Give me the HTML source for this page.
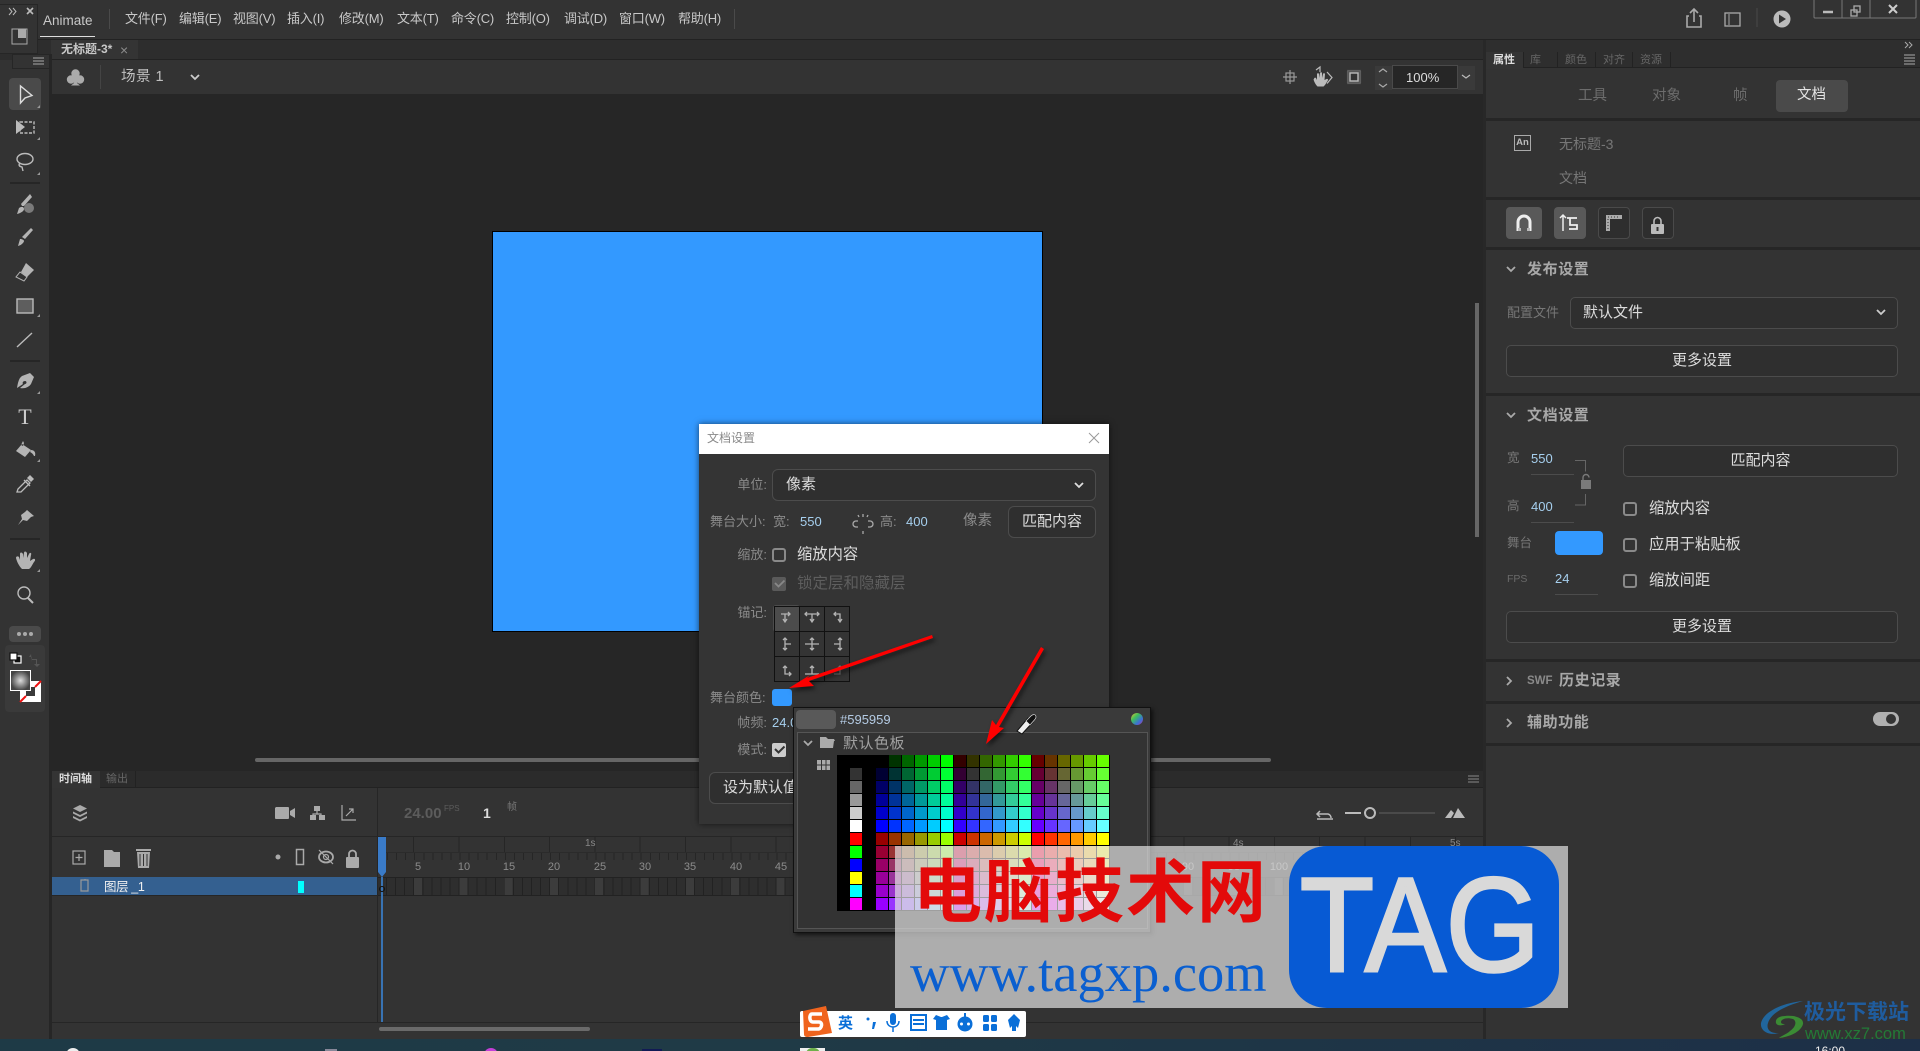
<!DOCTYPE html>
<html lang="zh"><head><meta charset="utf-8"><title>Animate</title>
<style>
html,body{margin:0;padding:0;background:#333}
#p{position:relative;width:1920px;height:1051px;overflow:hidden;background:#333;font-family:"Liberation Sans","Noto Sans CJK SC",sans-serif;color:#ccc}
.a{position:absolute}
.t{position:absolute;white-space:nowrap;line-height:1}
.m{font-size:13px;color:#c8c8c8;top:12px;letter-spacing:-.2px}
.l{font-size:13px;color:#8a8a8a;text-align:right;width:60px;left:707px}
.b{position:absolute;box-sizing:border-box;border:1px solid #4c4c4c;border-radius:5px;background:#2f2f2f;color:#ddd;font-size:15px;text-align:center;line-height:30px}
.s{position:absolute;left:1486px;width:434px;height:3px;background:#262626}
.h{font-size:15px;font-weight:700;color:#a8a8a8;left:1527px;letter-spacing:.6px}
.c{position:absolute;box-sizing:border-box;width:14px;height:14px;border:2px solid #8a8a8a;border-radius:3px}
.r{font-size:11px;color:#8c8c8c;top:862px;width:30px;text-align:center}
svg{position:absolute;left:0;top:0;overflow:visible}
#g{position:absolute;left:837px;top:755px;width:273px;height:156px;background:#000;display:grid;grid-template-columns:repeat(21,12px);grid-auto-rows:12px;gap:1px}
#g b{display:block}
</style></head><body><div id="p">

<!-- base regions -->
<div class="a" style="left:0;top:0;width:1920px;height:39px;background:#333"></div>
<div class="a" style="left:0;top:39px;width:1920px;height:1px;background:#222"></div>
<div class="a" style="left:0;top:40px;width:1486px;height:20px;background:#2d2d2d"></div>
<div class="a" style="left:51px;top:40px;width:87px;height:19px;background:#343434"></div>
<div class="a" style="left:51px;top:59px;width:1432px;height:1px;background:#222"></div>
<div class="a" style="left:52px;top:60px;width:1431px;height:34px;background:#333"></div>
<div class="a" style="left:50px;top:94px;width:1433px;height:677px;background:#262626"></div>
<div class="a" style="left:49px;top:54px;width:3px;height:985px;background:#262626"></div>
<div class="a" style="left:1483px;top:40px;width:3px;height:999px;background:#282828"></div>

<!-- stage -->
<div class="a" style="left:492px;top:231px;width:549px;height:399px;background:#39f;border:1px solid #000"></div>
<div class="a" style="left:255px;top:758px;width:1016px;height:4px;background:#666;border-radius:2px"></div>
<div class="a" style="left:1475px;top:303px;width:4px;height:234px;background:#666"></div>

<!-- top bar -->
<span class="t" style="left:43px;top:14px;font-size:13.5px;color:#c8c8c8">Animate</span>
<div class="a" style="left:40px;top:36px;width:55px;height:1px;background:#ddd"></div>
<div class="a" style="left:109px;top:9px;width:1px;height:20px;background:#4a4a4a"></div>
<span class="t m" style="left:125px">文件(F)</span>
<span class="t m" style="left:179px">编辑(E)</span>
<span class="t m" style="left:233px">视图(V)</span>
<span class="t m" style="left:287px">插入(I)</span>
<span class="t m" style="left:339px">修改(M)</span>
<span class="t m" style="left:397px">文本(T)</span>
<span class="t m" style="left:451px">命令(C)</span>
<span class="t m" style="left:506px">控制(O)</span>
<span class="t m" style="left:564px">调试(D)</span>
<span class="t m" style="left:619px">窗口(W)</span>
<span class="t m" style="left:678px">帮助(H)</span>
<div class="a" style="left:734px;top:9px;width:1px;height:20px;background:#4a4a4a"></div>

<!-- float panel -->
<div class="a" style="left:0;top:4px;width:38px;height:50px;background:#333;border:1px solid #262626;border-left:0;box-sizing:border-box"></div>
<div class="a" style="left:12px;top:54px;width:38px;height:15px;background:#333;border:1px solid #262626;box-sizing:border-box"></div>

<!-- tab/scene -->
<span class="t" style="left:61px;top:43px;font-size:12px;font-weight:700;color:#c8c8c8">无标题-3*</span>
<span class="t" style="left:120px;top:43px;font-size:14px;color:#8c8c8c">×</span>
<span class="t" style="left:121px;top:70px;font-size:14.5px;color:#c0c0c0;letter-spacing:.5px">场景 1</span>
<div class="a" style="left:100px;top:65px;width:1px;height:24px;background:#444"></div>

<!-- zoom control -->
<div class="a" style="left:1375px;top:66px;width:17px;height:24px;background:#3a3a3a"></div>
<div class="a" style="left:1392px;top:65px;width:66px;height:24px;background:#262626;border:1px solid #4a4a4a;box-sizing:border-box"></div>
<div class="a" style="left:1458px;top:66px;width:17px;height:24px;background:#3a3a3a"></div>
<span class="t" style="left:1406px;top:71px;font-size:13px;color:#ddd">100%</span>

<!-- right panel -->
<div class="a" style="left:1486px;top:40px;width:434px;height:12px;background:#2e2e2e"></div>
<div class="a" style="left:1486px;top:52px;width:434px;height:16px;background:#2e2e2e;border-bottom:1px solid #222;box-sizing:border-box"></div>
<div class="a" style="left:1486px;top:52px;width:38px;height:17px;background:#343434"></div>
<div class="a" style="left:1557px;top:52px;width:1px;height:16px;background:#222"></div>
<div class="a" style="left:1595px;top:52px;width:1px;height:16px;background:#222"></div>
<div class="a" style="left:1632px;top:52px;width:1px;height:16px;background:#222"></div>
<div class="a" style="left:1670px;top:52px;width:1px;height:16px;background:#222"></div>
<div class="a" style="left:1523px;top:52px;width:1px;height:16px;background:#222"></div>
<span class="t" style="left:1493px;top:55px;font-size:11px;font-weight:700;color:#ddd">属性</span>
<span class="t" style="left:1530px;top:55px;font-size:11px;color:#666">库</span>
<span class="t" style="left:1565px;top:55px;font-size:11px;color:#666">颜色</span>
<span class="t" style="left:1603px;top:55px;font-size:11px;color:#666">对齐</span>
<span class="t" style="left:1640px;top:55px;font-size:11px;color:#666">资源</span>

<span class="t" style="left:1578px;top:89px;font-size:14.5px;color:#6c6c6c">工具</span>
<span class="t" style="left:1652px;top:89px;font-size:14.5px;color:#6c6c6c">对象</span>
<span class="t" style="left:1733px;top:89px;font-size:14.5px;color:#6c6c6c">帧</span>
<div class="a" style="left:1776px;top:80px;width:72px;height:32px;background:#4a4a4a;border-radius:4px"></div>
<span class="t" style="left:1797px;top:88px;font-size:14.5px;color:#e4e4e4">文档</span>
<div class="s" style="top:118px"></div>

<div class="a" style="left:1514px;top:135px;width:17px;height:16px;border:1px solid #aaa;box-sizing:border-box;font-size:9.5px;line-height:14px;text-align:center;color:#bbb;font-weight:700">An</div>
<span class="t" style="left:1559px;top:137px;font-size:14px;color:#777">无标题-3</span>
<span class="t" style="left:1559px;top:171px;font-size:14px;color:#777">文档</span>
<div class="s" style="top:197px"></div>

<div class="a" style="left:1506px;top:207px;width:36px;height:32px;background:#595959;border-radius:4px"></div>
<div class="a" style="left:1554px;top:207px;width:32px;height:32px;background:#595959;border-radius:4px"></div>
<div class="a" style="left:1598px;top:207px;width:32px;height:32px;background:#2e2e2e;border:1px solid #4a4a4a;border-radius:4px;box-sizing:border-box"></div>
<div class="a" style="left:1642px;top:207px;width:32px;height:32px;background:#2e2e2e;border:1px solid #4a4a4a;border-radius:4px;box-sizing:border-box"></div>
<div class="s" style="top:247px"></div>

<span class="t h" style="top:262px">发布设置</span>
<span class="t" style="left:1507px;top:306px;font-size:13px;color:#777">配置文件</span>
<div class="b" style="left:1570px;top:297px;width:328px;height:32px;text-align:left;padding-left:12px">默认文件</div>
<div class="b" style="left:1506px;top:345px;width:392px;height:32px">更多设置</div>
<div class="s" style="top:393px"></div>

<span class="t h" style="top:408px">文档设置</span>
<span class="t" style="left:1507px;top:452px;font-size:12.5px;color:#777">宽</span>
<span class="t" style="left:1531px;top:452px;font-size:13px;color:#a6cfee">550</span>
<div class="a" style="left:1531px;top:474px;width:43px;height:1px;background:#4c4c4c"></div>
<span class="t" style="left:1507px;top:500px;font-size:12.5px;color:#777">高</span>
<span class="t" style="left:1531px;top:500px;font-size:13px;color:#a6cfee">400</span>
<div class="a" style="left:1531px;top:522px;width:43px;height:1px;background:#4c4c4c"></div>
<span class="t" style="left:1507px;top:537px;font-size:12.5px;color:#777">舞台</span>
<div class="a" style="left:1555px;top:531px;width:48px;height:24px;background:#39f;border-radius:4px"></div>
<span class="t" style="left:1507px;top:574px;font-size:10.5px;color:#6a6a6a">FPS</span>
<span class="t" style="left:1555px;top:572px;font-size:13px;color:#a6cfee">24</span>
<div class="a" style="left:1555px;top:594px;width:43px;height:1px;background:#4c4c4c"></div>
<div class="b" style="left:1623px;top:445px;width:275px;height:32px">匹配内容</div>
<div class="c" style="left:1623px;top:502px"></div><span class="t" style="left:1649px;top:501px;font-size:15.3px;color:#ddd">缩放内容</span>
<div class="c" style="left:1623px;top:538px"></div><span class="t" style="left:1649px;top:537px;font-size:15.3px;color:#ddd">应用于粘贴板</span>
<div class="c" style="left:1623px;top:574px"></div><span class="t" style="left:1649px;top:573px;font-size:15.3px;color:#ddd">缩放间距</span>
<div class="b" style="left:1506px;top:611px;width:392px;height:32px">更多设置</div>
<div class="s" style="top:659px"></div>
<span class="t" style="left:1527px;top:676px;font-size:11.5px;font-weight:700;color:#8a8a8a">SWF</span>
<span class="t h" style="left:1559px;top:673px">历史记录</span>
<div class="s" style="top:701px"></div>
<span class="t h" style="top:715px">辅助功能</span>
<div class="a" style="left:1873px;top:712px;width:26px;height:14px;background:#b0b0b0;border-radius:7px"></div>
<div class="a" style="left:1886px;top:714px;width:10px;height:10px;background:#333;border-radius:5px"></div>
<div class="s" style="top:743px"></div>

<!-- timeline -->
<div class="a" style="left:52px;top:771px;width:1431px;height:16px;background:#2b2b2b;border-bottom:1px solid #222"></div>
<div class="a" style="left:52px;top:771px;width:48px;height:17px;background:#343434"></div>
<div class="a" style="left:135px;top:771px;width:1px;height:16px;background:#222"></div>
<span class="t" style="left:59px;top:774px;font-size:11px;font-weight:700;color:#ddd">时间轴</span>
<span class="t" style="left:106px;top:774px;font-size:11px;color:#666">输出</span>
<div class="a" style="left:377px;top:788px;width:1px;height:234px;background:#262626"></div>
<div class="a" style="left:52px;top:836px;width:1431px;height:1px;background:#262626"></div>
<span class="t" style="left:404px;top:806px;font-size:15px;font-weight:700;color:#5c5c5c">24.00</span>
<span class="t" style="left:444px;top:805px;font-size:8px;color:#5c5c5c">FPS</span>
<span class="t" style="left:483px;top:806px;font-size:14px;font-weight:700;color:#ddd">1</span>
<span class="t" style="left:507px;top:803px;font-size:10px;color:#777">帧</span>
<!-- ruler -->
<div class="a" style="left:378px;top:837px;width:1092px;height:15px;background:repeating-linear-gradient(90deg,transparent 0 35.2px,#262626 35.2px 36.2px,transparent 36.2px 45.3px)"></div>
<div class="a" style="left:378px;top:852px;width:1092px;height:8px;background:repeating-linear-gradient(90deg,#262626 0 1px,transparent 1px 9.06px)"></div>
<div class="a" style="left:378px;top:852px;width:1092px;height:1px;background:#2b2b2b"></div>
<span class="t r" style="left:403px">5</span><span class="t r" style="left:449px">10</span><span class="t r" style="left:494px">15</span><span class="t r" style="left:539px">20</span><span class="t r" style="left:585px">25</span><span class="t r" style="left:630px">30</span><span class="t r" style="left:675px">35</span><span class="t r" style="left:721px">40</span><span class="t r" style="left:766px">45</span><span class="t r" style="left:1173px">90</span><span class="t r" style="left:1219px">95</span><span class="t r" style="left:1264px">100</span><span class="t r" style="left:1309px">105</span><span class="t r" style="left:1355px">110</span><span class="t r" style="left:1400px">115</span><span class="t r" style="left:1445px">120</span>
<span class="t" style="left:585px;top:839px;font-size:10px;color:#888">1s</span>
<span class="t" style="left:1233px;top:839px;font-size:10px;color:#888">4s</span>
<span class="t" style="left:1450px;top:839px;font-size:10px;color:#888">5s</span>
<!-- layer row -->
<div class="a" style="left:52px;top:877px;width:325px;height:19px;background:#346090;border-bottom:1px solid #262626;box-sizing:border-box"></div>
<span class="t" style="left:104px;top:881px;font-size:12.5px;color:#f0f0f0;letter-spacing:-.4px">图层 _1</span>
<div class="a" style="left:298px;top:881px;width:6px;height:12px;background:#0ff"></div>
<div class="a" style="left:378px;top:877px;width:1092px;height:19px;background:repeating-linear-gradient(90deg,#2e2e2e 0 8.06px,#222 8.06px 9.06px);border-top:1px solid #222;border-bottom:1px solid #222;box-sizing:border-box"></div>
<div class="a" style="left:414.2px;top:878px;width:1056px;height:17px;background:repeating-linear-gradient(90deg,#3c3c3c 0 8px,transparent 8px 45.3px)"></div>
<div class="a" style="left:381px;top:877px;width:2px;height:145px;background:#3873b3"></div>
<div class="a" style="left:52px;top:1022px;width:1431px;height:1px;background:#262626"></div>
<div class="a" style="left:379px;top:1027px;width:211px;height:4px;background:#6a6a6a;border-radius:2px"></div>

<!-- taskbar -->
<div class="a" style="left:0;top:1039px;width:1920px;height:12px;background:linear-gradient(90deg,#1e3a46,#1f3a46 40%,#1d2f47)"></div>
<div class="a" style="left:66px;top:1048px;width:14px;height:14px;background:#eee;border-radius:7px"></div>
<div class="a" style="left:325px;top:1049px;width:12px;height:6px;background:#889"></div>
<div class="a" style="left:484px;top:1048px;width:14px;height:14px;background:#c43fd8;border-radius:7px"></div>
<div class="a" style="left:642px;top:1049px;width:20px;height:6px;background:#111a55"></div>
<div class="a" style="left:800px;top:1048px;width:25px;height:6px;background:#eee"></div>
<div class="a" style="left:806px;top:1048px;width:14px;height:6px;background:#6db04a;border-radius:7px 7px 0 0"></div>
<span class="t" style="left:1815px;top:1045px;font-size:12px;color:#eee">16:00</span>

<!-- base icons -->
<svg width="1920" height="1051" viewBox="0 0 1920 1051">
<g fill="none" stroke="#bbb" stroke-width="1.500">
<!-- float -->
<path d="M9 8l3 3.500-3 3.500M13 8l3 3.500-3 3.500" stroke-width="1"/>
<path d="M27 8l6 6M33 8l-6 6" stroke-width="1.600"/>
<rect x="12" y="29" width="15" height="15" fill="none" stroke="#aaa" stroke-width="1"/>
<rect x="18" y="29" width="8" height="9" fill="#aaa" stroke="none"/>
<path d="M34 59h11M34 62h11M34 65h11" stroke="#aaa" stroke-width="1" transform="translate(-1 -1)"/>
</g>
<!-- toolbar -->
<rect x="9" y="78" width="32" height="32" rx="4" fill="#4a4a4a"/>
<g fill="none" stroke="#bbb" stroke-width="1.400">
<path d="M20.500 86v17l4.500-5 7-2.500z" stroke="#ddd"/>
<path d="M16 120v14l9-7z" fill="#bbb" stroke="none"/>
<rect x="20" y="122" width="14" height="11" stroke-dasharray="3 1.500"/>
<ellipse cx="25" cy="159" rx="8" ry="5.500"/><path d="M20 163q-2.500 3 2 4l1 4"/>
<path d="M10 183h30M10 361h30M10 539h30" stroke="#262626" stroke-width="2"/>
<path d="M17 347L32 333"/>
<rect x="17" y="299" width="16" height="14" fill="#5e5e5e" stroke="#bbb"/>
<ellipse cx="24" cy="593" rx="6" ry="6" /><path d="M28 598l5 5" stroke-width="2"/>
<path d="M17 492l1-3 9-9 3 3-9 9zM24 480l6 6" stroke-width="1.300"/><path d="M27 478l3-3 4 4-3 3z" fill="#bbb" stroke="none"/>
</g>
<g fill="#b4b4b4">
<g transform="translate(0 2)"><path d="M32 195l-8 9-2 0-1-2 9-10z M19 206c3-2 5-1 5 1s-3 4-7 5z"/><ellipse cx="29" cy="206" rx="5" ry="5" fill="#7a7a7a"/></g>
<path d="M33 230l-8 9-3-2 9-9z M20 239c2 0 4 1 4 2s-2 4-6 5z"/>
<path d="M26 263l8 7-7 7-6-5z"/><path d="M20 272l7 5-3 4-8-4z" fill="none" stroke="#b4b4b4"/>
<path transform="translate(0 2)" d="M34 375l-4-4-8 3c-3 2-4 6-5 12l6-4c-1-1 0-3 2-3s2 3 0 3l-5 4c5 1 9-1 11-4z"/>
<path d="M22 444l9 6-6 7-9-6z M23 441l-2 4 2 1 1-3z M31 450c3 0 5 2 4 6l-1 0c-1-2-2-3-4-4z"/>
<path d="M27 510l7 6-3 1-4 4-4-1-5 5 4-6-1-4 4-3z"/>
<path transform="translate(0 -4)" d="M16 562c0-2 2-2 3-1l1 3 0-6c0-2 2-2 3 0l0 4 1-5c0-2 2-2 3 0l0 5 2-4c1-2 3-1 2 1l-1 6 3-2c2-1 3 1 1 3-2 3-3 6-5 7h-7c-3-3-5-7-6-11z"/>
<path d="M37 108l3-3v3zM37 140l3-3v3zM37 175l3-3v3zM37 317l3-3v3zM37 394l3-3v3zM37 462l3-3v3zM37 572l3-3v3z" fill="#999"/>
</g>
<!-- more -->
<rect x="9" y="626" width="32" height="16" rx="4" fill="#4a4a4a"/>
<g fill="#aaa"><circle cx="19" cy="634" r="2"/><circle cx="25" cy="634" r="2"/><circle cx="31" cy="634" r="2"/></g>
<rect x="5" y="645" width="40" height="67" rx="4" fill="#3a3a3a"/>
<rect x="14" y="656" width="7" height="7" fill="#111" stroke="#fff" stroke-width="1.200"/><rect x="10" y="653" width="7" height="7" fill="#fff" stroke="#111" stroke-width="1.200"/>
<path d="M31 654l-2 3h3v2h5v5h3l-3 3-3-3h2v-4h-4v2z" fill="#555"/>
<path d="M20 681h21v21h-21z" fill="#fff"/><rect x="26" y="687" width="9" height="9" fill="#3a3a3a"/><path d="M35 687l6-6M20 702l6-6" stroke="#e11" stroke-width="2"/>
<defs><radialGradient id="rg"><stop offset="0" stop-color="#ddd"/><stop offset="1" stop-color="#444"/></radialGradient></defs>
<rect x="10.500" y="670.500" width="20" height="20" fill="url(#rg)" stroke="#fff"/>

<!-- scene -->
<g fill="#aaa"><circle cx="75.500" cy="73.500" r="4.200"/><circle cx="71" cy="79.500" r="4.200"/><circle cx="80" cy="79.500" r="4.200"/><path d="M74.500 75h2l.5 8 3 2.500h-9l3-2.500z"/></g>
<path d="M191 75l4 4 4-4" fill="none" stroke="#ccc" stroke-width="1.800"/>
<!-- stage tools -->
<g fill="none" stroke="#999" stroke-width="1.200">
<rect x="1286" y="73" width="8" height="8"/><path d="M1290 70v14M1283 77h14"/>
<rect x="1347.500" y="70.500" width="13" height="13" fill="#555" stroke="#777" stroke-dasharray="1 1"/>
<rect x="1350" y="73" width="8" height="8" fill="#333" stroke="#bbb" stroke-width="1.400"/>
<path d="M1379 72l4-3 4 3M1379 84l4 3 4-3" stroke="#aaa"/><path d="M1462 75l4 3 4-3" stroke="#bbb"/>
</g>
<path transform="translate(-2 0)" d="M1316 79c0-1 1-2 2-1l1 2 0-6c0-1 2-1 2 0l0 4 1-5c0-1 2-1 2 0l0 5 1-4c0-1 2-1 2 0l-.5 6 2-1c1.500-.5 2 1 1 2-1.500 2-2 4-4 5.500h-6c-2-2-3-4-4-7z" fill="#bbb"/>
<path d="M1327 72l5 5.500-5 6M1316 70l4-3v5" fill="none" stroke="#bbb" stroke-width="1.200"/>
<!-- top right -->
<g fill="none" stroke="#aaa" stroke-width="1.600">
<path transform="translate(1 2)" d="M1688 14h-2v11h14v-11h-2M1693 20v-12M1689 11l4-4 4 4"/>
<rect x="1725" y="13" width="15" height="13" stroke-width="1.300"/><path d="M1729 14v11" stroke-width="1"/>
<path d="M1757 8v19" stroke="#4a4a4a" stroke-width="1"/>
<path d="M1814 0v17a1 1 0 0 0 1 1h100a1 1 0 0 0 1-1V0M1842 0v18M1870 0v18" stroke="#777" stroke-width="1"/>
<path d="M1823 12h10" stroke-width="2.500" stroke="#bbb"/>
<rect x="1851" y="10" width="6" height="6" stroke-width="1.300"/><rect x="1854" y="6" width="6" height="6" stroke-width="1.300"/>
<path d="M1889 5l8 8M1897 5l-8 8" stroke="#ccc" stroke-width="2"/>
</g>
<circle cx="1782" cy="19" r="8.500" fill="#bbb"/><path d="M1779 14.500v9l7-4.500z" fill="#333"/>
<!-- right panel tabs -->
<path d="M1905 42l3 3-3 3M1909 42l3 3-3 3" fill="none" stroke="#aaa"/>
<path d="M1904 55h11M1904 58h11M1904 61h11M1904 64h11" stroke="#aaa" stroke-width="1"/>
<!-- buttons icons -->
<path d="M1518 231v-9a6 6 0 0 1 12 0v9" fill="none" stroke="#eee" stroke-width="3"/><path d="M1518 228v3h3v-3zM1527 228v3h3v-3z" fill="#bbb"/>
<path d="M1563 215v16M1560 218l3-3 3 3" fill="none" stroke="#eee" stroke-width="1.500"/>
<path d="M1567 218h10M1570 218v7h7v4h-8" fill="none" stroke="#eee" stroke-width="1.800"/>
<path d="M1606 215h16v4h-12v12h-4z" fill="#aaa"/><path d="M1608 217h12M1608 219v10" stroke="#333" stroke-dasharray="1 2" stroke-width="1"/>
<rect x="1651" y="224" width="13" height="10" rx="1" fill="#bbb"/><path d="M1654 224v-3a3.500 3.500 0 0 1 7 0v3" fill="none" stroke="#bbb" stroke-width="1.600"/><rect x="1656.500" y="227" width="2" height="4" fill="#333"/>
<!-- chevrons -->
<g fill="none" stroke="#aaa" stroke-width="1.800">
<path d="M1507 267l4 4 4-4M1507 413l4 4 4-4"/>
<path d="M1507 677l4 4-4 4M1507 719l4 4-4 4"/>
<path d="M1877 310l4 4 4-4" stroke="#ccc"/>
</g>
<!-- bracket+lock -->
<path d="M1575 460.500h10.500v11M1585.500 494v11h-10.500" fill="none" stroke="#666"/>
<rect x="1581" y="480" width="10" height="9" fill="#7a7a7a"/><path d="M1583 480v-2.500a3 3 0 0 1 6 0" fill="none" stroke="#7a7a7a" stroke-width="1.400"/>
<!-- timeline icons -->
<path d="M1468 776h11M1468 779h11M1468 782h11" stroke="#888"/>
<g fill="#aaa">
<path d="M80 805l7 3.500-7 3.500-7-3.500z"/><path d="M73 811.500l7 3.500 7-3.500v2l-7 3.500-7-3.500zM73 816l7 3.500 7-3.500v2l-7 3.500-7-3.500z"/>
<path transform="translate(-2 0)" d="M278 807h12a1 1 0 0 1 1 1v10a1 1 0 0 1-1 1h-12a1 1 0 0 1-1-1v-10zM292 811l5-3v10l-5-3z"/>
<rect x="314" y="806" width="6" height="5"/><rect x="310" y="815" width="6" height="5"/><rect x="319" y="815" width="6" height="5"/>
<path d="M104 850h8l2 2h6v15h-16z"/><path d="M137 852h13l-1 16h-11zM136 849h15v2h-15z"/>
<circle cx="278" cy="857" r="2.500"/>
<rect x="346" y="857" width="13" height="11" rx="1"/>
</g>
<path d="M140 854v12M143.500 854v12M147 854v12" stroke="#333"/>
<g fill="none" stroke="#aaa" stroke-width="1.200">
<path d="M317 811v3M313 815v-1h8v1"/>
<path d="M342 805v15h14M346 816l7-7M349 809h4v4"/>
<rect x="73" y="851" width="12" height="13"/><path d="M79 854v7M75.500 857.500h7"/>
<rect x="296.500" y="849.500" width="7" height="15" stroke-width="1.500"/>
<ellipse cx="326" cy="857" rx="7" ry="5.500" stroke-width="1.800"/><circle cx="326" cy="857" r="2.500"/><path d="M319 850l14 14"/>
<path d="M349 857v-3a3.500 3.500 0 0 1 7 0v3" stroke-width="1.800"/>
<path d="M81 880h7v11h-7zM85 880v-1" stroke="#999"/>
<path d="M1320 811l-3 3 3 3M1318 814h10a4 4 0 0 1 3 4" stroke="#bbb" stroke-width="1.500"/>
<path d="M1317 819h16" stroke="#bbb" stroke-width="1.500"/>
<path d="M1345 813h16" stroke="#bbb" stroke-width="2"/><circle cx="1370" cy="813" r="5" stroke="#bbb" stroke-width="2"/>
<path d="M1379 813h56" stroke="#4a4a4a" stroke-width="2"/>
</g>
<path d="M1445 818l6-8 3 3-3 5zM1453 818l5-10 7 10z" fill="#bbb"/>
<path d="M378 837h8v35l-4 5-4-5z" fill="#3a7bc8"/>
<circle cx="382" cy="889" r="2.500" fill="none" stroke="#111"/>
</svg>
<span class="t" style="left:13px;top:406px;width:24px;text-align:center;font-family:'Liberation Serif',serif;font-size:22px;color:#ccc">T</span>

<!-- dialog -->
<div class="a" style="left:699px;top:424px;width:410px;height:400px;background:#343434;box-shadow:0 0 6px rgba(0,0,0,.6);z-index:5">
<div class="a" style="left:0;top:0;width:410px;height:30px;background:#fff"></div>
<span class="t" style="left:8px;top:8px;font-size:12px;color:#8a8a8a">文档设置</span>
<svg width="410" height="400"><path d="M390 9l10 10M400 9l-10 10" stroke="#999" fill="none"/></svg>
</div>
<div class="a" style="left:0;top:0;z-index:6">
<span class="t l" style="top:478px">单位:</span>
<div class="b" style="left:772px;top:469px;width:324px;height:32px;text-align:left;padding-left:13px;border-radius:6px">像素</div>
<span class="t l" style="top:515px;left:710px;width:57px;text-align:left">舞台大小:</span>
<span class="t l" style="top:515px;left:773px;width:24px;text-align:left">宽:</span>
<span class="t" style="left:800px;top:515px;font-size:13px;color:#a6cfee">550</span>
<span class="t l" style="top:515px;left:880px;width:24px;text-align:left">高:</span>
<span class="t" style="left:906px;top:515px;font-size:13px;color:#a6cfee">400</span>
<span class="t" style="left:963px;top:514px;font-size:14.5px;color:#8a8a8a">像素</span>
<div class="b" style="left:1008px;top:506px;width:88px;height:32px;border-radius:6px">匹配内容</div>
<span class="t l" style="top:548px">缩放:</span>
<div class="c" style="left:772px;top:548px"></div>
<span class="t" style="left:797px;top:547px;font-size:15.3px;color:#ddd">缩放内容</span>
<div class="a" style="left:772px;top:577px;width:14px;height:14px;background:#5a5a5a;border-radius:2px"></div>
<span class="t" style="left:797px;top:576px;font-size:15.5px;color:#5e5e5e">锁定层和隐藏层</span>
<span class="t l" style="top:606px">锚记:</span>
<div class="a" style="left:773px;top:605px;width:27px;height:27px;background:#4c4c4c;border-radius:3px"></div>
<span class="t l" style="top:691px;left:710px;width:57px;text-align:left">舞台颜色:</span>
<div class="a" style="left:772px;top:689px;width:20px;height:17px;background:#39f;border-radius:3px"></div>
<span class="t l" style="top:716px">帧频:</span>
<span class="t" style="left:772px;top:716px;font-size:13px;color:#a6cfee">24.0</span>
<span class="t l" style="top:743px">模式:</span>
<div class="a" style="left:772px;top:743px;width:14px;height:14px;background:#ccc;border-radius:2px"></div>
<div class="b" style="left:709px;top:772px;width:120px;height:32px;text-align:left;padding-left:13px;border-radius:6px">设为默认值</div>
<svg width="1920" height="1051">
<g fill="none" stroke="#aaa" stroke-width="1.500">
<path d="M1075 483l4 4 4-4" stroke="#ddd" stroke-width="1.800"/>
<path d="M858 521h-2a3 3 0 0 0 0 6h2M868 521h2a3 3 0 0 1 0 6h-2M863 514v3M863 531v3M858 515l1 2M868 515l-1 2" stroke-width="1.300"/>
<path d="M775 583l3.500 3.500 6-6" stroke="#888" stroke-width="1.800"/>
<path d="M775 749l3.500 3.500 6-6" stroke="#333" stroke-width="2"/>
</g>
<g stroke="#111" fill="none"><path d="M774.500 606.500h75v75h-75zM799.500 606.500v75M824.500 606.500v75M774.500 631.500h75M774.500 656.500h75"/></g>
<g stroke="#b4b4b4" stroke-width="1.300" fill="none">
<path d="M781 614h9M785 614v7M783 619l2 3 2-3M788 612l2 2-2 2"/>
<path d="M805 614h14M812 614v7M810 619l2 3 2-3M807 612l-2 2 2 2M817 612l2 2-2 2"/>
<path d="M834 614h6v7M838 619l2 3 2-3M836 612l-2 2 2 2"/>
<path d="M785 638v12M783 640l2-2 2 2M783 648l2 2 2-2M785 644h6"/>
<path d="M805 644h14M812 638v12M810 640l2-2 2 2M810 648l2 2 2-2"/>
<path d="M840 638v12M838 640l2-2 2 2M838 648l2 2 2-2M834 644h6"/>
<path d="M785 666v8h6M783 668l2-2 2 2M789 672l2 2-2 2"/>
<path d="M812 666v8M805 674h14M810 668l2-2 2 2"/>
<path d="M840 666v8h-6M838 668l2-2 2 2" opacity=".5"/>
</g>
</svg>
</div>

<!-- color popup -->
<div class="a" style="left:793px;top:707px;width:358px;height:226px;background:#3a3a3a;border:1px solid #111;box-sizing:border-box;box-shadow:2px 2px 4px rgba(0,0,0,.6);z-index:7"></div>
<div class="a" style="left:797px;top:732px;width:351px;height:197px;background:#333;border:1px solid #555;box-sizing:border-box;z-index:7"></div>
<div class="a" style="left:796px;top:710px;width:40px;height:19px;background:#595959;border-radius:4px;z-index:7"></div>
<span class="t" style="left:840px;top:713px;font-size:13px;color:#b4cbe4;z-index:7">#595959</span>
<span class="t" style="left:843px;top:736px;font-size:15px;color:#a0a0a0;letter-spacing:.5px;z-index:7">默认色板</span>
<div id="g" style="z-index:7">
<b style="background:#000"></b><b style="background:#000"></b><b style="background:#000"></b><b style="background:#000"></b><b style="background:#030"></b><b style="background:#060"></b><b style="background:#090"></b><b style="background:#0c0"></b><b style="background:#0f0"></b><b style="background:#300"></b><b style="background:#330"></b><b style="background:#360"></b><b style="background:#390"></b><b style="background:#3c0"></b><b style="background:#3f0"></b><b style="background:#600"></b><b style="background:#630"></b><b style="background:#660"></b><b style="background:#690"></b><b style="background:#6c0"></b><b style="background:#6f0"></b>
<b style="background:#000"></b><b style="background:#333"></b><b style="background:#000"></b><b style="background:#003"></b><b style="background:#033"></b><b style="background:#063"></b><b style="background:#093"></b><b style="background:#0c3"></b><b style="background:#0f3"></b><b style="background:#303"></b><b style="background:#333"></b><b style="background:#363"></b><b style="background:#393"></b><b style="background:#3c3"></b><b style="background:#3f3"></b><b style="background:#603"></b><b style="background:#633"></b><b style="background:#663"></b><b style="background:#693"></b><b style="background:#6c3"></b><b style="background:#6f3"></b>
<b style="background:#000"></b><b style="background:#666"></b><b style="background:#000"></b><b style="background:#006"></b><b style="background:#036"></b><b style="background:#066"></b><b style="background:#096"></b><b style="background:#0c6"></b><b style="background:#0f6"></b><b style="background:#306"></b><b style="background:#336"></b><b style="background:#366"></b><b style="background:#396"></b><b style="background:#3c6"></b><b style="background:#3f6"></b><b style="background:#606"></b><b style="background:#636"></b><b style="background:#666"></b><b style="background:#696"></b><b style="background:#6c6"></b><b style="background:#6f6"></b>
<b style="background:#000"></b><b style="background:#999"></b><b style="background:#000"></b><b style="background:#009"></b><b style="background:#039"></b><b style="background:#069"></b><b style="background:#099"></b><b style="background:#0c9"></b><b style="background:#0f9"></b><b style="background:#309"></b><b style="background:#339"></b><b style="background:#369"></b><b style="background:#399"></b><b style="background:#3c9"></b><b style="background:#3f9"></b><b style="background:#609"></b><b style="background:#639"></b><b style="background:#669"></b><b style="background:#699"></b><b style="background:#6c9"></b><b style="background:#6f9"></b>
<b style="background:#000"></b><b style="background:#ccc"></b><b style="background:#000"></b><b style="background:#00c"></b><b style="background:#03c"></b><b style="background:#06c"></b><b style="background:#09c"></b><b style="background:#0cc"></b><b style="background:#0fc"></b><b style="background:#30c"></b><b style="background:#33c"></b><b style="background:#36c"></b><b style="background:#39c"></b><b style="background:#3cc"></b><b style="background:#3fc"></b><b style="background:#60c"></b><b style="background:#63c"></b><b style="background:#66c"></b><b style="background:#69c"></b><b style="background:#6cc"></b><b style="background:#6fc"></b>
<b style="background:#000"></b><b style="background:#fff"></b><b style="background:#000"></b><b style="background:#00f"></b><b style="background:#03f"></b><b style="background:#06f"></b><b style="background:#09f"></b><b style="background:#0cf"></b><b style="background:#0ff"></b><b style="background:#30f"></b><b style="background:#33f"></b><b style="background:#36f"></b><b style="background:#39f"></b><b style="background:#3cf"></b><b style="background:#3ff"></b><b style="background:#60f"></b><b style="background:#63f"></b><b style="background:#66f"></b><b style="background:#69f"></b><b style="background:#6cf"></b><b style="background:#6ff"></b>
<b style="background:#000"></b><b style="background:#f00"></b><b style="background:#000"></b><b style="background:#900"></b><b style="background:#930"></b><b style="background:#960"></b><b style="background:#990"></b><b style="background:#9c0"></b><b style="background:#9f0"></b><b style="background:#c00"></b><b style="background:#c30"></b><b style="background:#c60"></b><b style="background:#c90"></b><b style="background:#cc0"></b><b style="background:#cf0"></b><b style="background:#f00"></b><b style="background:#f30"></b><b style="background:#f60"></b><b style="background:#f90"></b><b style="background:#fc0"></b><b style="background:#ff0"></b>
<b style="background:#000"></b><b style="background:#0f0"></b><b style="background:#000"></b><b style="background:#903"></b><b style="background:#933"></b><b style="background:#963"></b><b style="background:#993"></b><b style="background:#9c3"></b><b style="background:#9f3"></b><b style="background:#c03"></b><b style="background:#c33"></b><b style="background:#c63"></b><b style="background:#c93"></b><b style="background:#cc3"></b><b style="background:#cf3"></b><b style="background:#f03"></b><b style="background:#f33"></b><b style="background:#f63"></b><b style="background:#f93"></b><b style="background:#fc3"></b><b style="background:#ff3"></b>
<b style="background:#000"></b><b style="background:#00f"></b><b style="background:#000"></b><b style="background:#906"></b><b style="background:#936"></b><b style="background:#966"></b><b style="background:#996"></b><b style="background:#9c6"></b><b style="background:#9f6"></b><b style="background:#c06"></b><b style="background:#c36"></b><b style="background:#c66"></b><b style="background:#c96"></b><b style="background:#cc6"></b><b style="background:#cf6"></b><b style="background:#f06"></b><b style="background:#f36"></b><b style="background:#f66"></b><b style="background:#f96"></b><b style="background:#fc6"></b><b style="background:#ff6"></b>
<b style="background:#000"></b><b style="background:#ff0"></b><b style="background:#000"></b><b style="background:#909"></b><b style="background:#939"></b><b style="background:#969"></b><b style="background:#999"></b><b style="background:#9c9"></b><b style="background:#9f9"></b><b style="background:#c09"></b><b style="background:#c39"></b><b style="background:#c69"></b><b style="background:#c99"></b><b style="background:#cc9"></b><b style="background:#cf9"></b><b style="background:#f09"></b><b style="background:#f39"></b><b style="background:#f69"></b><b style="background:#f99"></b><b style="background:#fc9"></b><b style="background:#ff9"></b>
<b style="background:#000"></b><b style="background:#0ff"></b><b style="background:#000"></b><b style="background:#90c"></b><b style="background:#93c"></b><b style="background:#96c"></b><b style="background:#99c"></b><b style="background:#9cc"></b><b style="background:#9fc"></b><b style="background:#c0c"></b><b style="background:#c3c"></b><b style="background:#c6c"></b><b style="background:#c9c"></b><b style="background:#ccc"></b><b style="background:#cfc"></b><b style="background:#f0c"></b><b style="background:#f3c"></b><b style="background:#f6c"></b><b style="background:#f9c"></b><b style="background:#fcc"></b><b style="background:#ffc"></b>
<b style="background:#000"></b><b style="background:#f0f"></b><b style="background:#000"></b><b style="background:#90f"></b><b style="background:#93f"></b><b style="background:#96f"></b><b style="background:#99f"></b><b style="background:#9cf"></b><b style="background:#9ff"></b><b style="background:#c0f"></b><b style="background:#c3f"></b><b style="background:#c6f"></b><b style="background:#c9f"></b><b style="background:#ccf"></b><b style="background:#cff"></b><b style="background:#f0f"></b><b style="background:#f3f"></b><b style="background:#f6f"></b><b style="background:#f9f"></b><b style="background:#fcf"></b><b style="background:#fff"></b>
</div>

<!-- popup icons + arrows -->
<svg width="1920" height="1051" style="z-index:8">
<defs><linearGradient id="wh" x1="0" y1="0" x2="1" y2="1"><stop offset="0" stop-color="#e8c23a"/><stop offset=".35" stop-color="#3fc05a"/><stop offset=".7" stop-color="#3a6fd8"/><stop offset="1" stop-color="#c0389a"/></linearGradient></defs>
<circle cx="1137" cy="719" r="6" fill="url(#wh)"/>
<path d="M804 741l4 4 4-4" fill="none" stroke="#aaa" stroke-width="1.800"/>
<path d="M820 737h6l2 2h6l1 2h-1l-1 7h-13z" fill="#aaa"/>
<path d="M817 760h13v10h-13z" fill="#aaa"/><path d="M821.500 760v10M826 760v10M817 765h13" stroke="#333"/>
<path d="M1017 731l11-13 5 4-11 12z" fill="#eee" stroke="#111"/><path d="M1026 721l5-5c2-2 5-2 5 1 0 2-2 3-6 8z" fill="#111" stroke="#eee" stroke-width=".6"/>
<g fill="#f00" style="filter:drop-shadow(2px 3px 2px rgba(0,0,0,.55))">
<polygon points="932,635 807,678 810,675 789,688 814,686 809,681 933,638"/>
<polygon points="1041,647 996,725 992,720 986,744 1004,728 999,727 1044,649"/>
</g>
</svg>

<!-- sogou -->
<div class="a" style="left:800px;top:1011px;width:226px;height:26px;background:#fff;border-radius:2px;z-index:9"></div>
<span class="t" style="left:838px;top:1016px;font-size:15px;font-weight:700;color:#0a6fd8;z-index:9">英</span>
<svg width="1920" height="1051" style="z-index:9">
<path d="M803 1011l23-5 6 27-24 4c-3 0-4-1-4-3z" fill="#f0641e"/>
<path d="M822 1014h-10c-3 0-3 8 1 8h6c4 0 3 7-1 7h-10" fill="none" stroke="#fff" stroke-width="3.500"/>
<g fill="#0a6fd8">
<circle cx="868" cy="1019" r="1.500"/><path d="M873 1022h3l-2 7h-2z"/>
<rect x="890" y="1013" width="6" height="12" rx="3"/><path d="M887 1021c0 8 12 8 12 0M893 1027v5" fill="none" stroke="#0a6fd8" stroke-width="1.500"/>
<path d="M911 1015h15v15h-15z" fill="none" stroke="#0a6fd8" stroke-width="2"/><path d="M913 1019h11v2h-11zM913 1023h11v2h-11z"/>
<path d="M936 1015l5 2h1l5-2 3 4-3 1v10h-11v-10l-3-1z"/>
<circle cx="965" cy="1024" r="7.500"/><rect x="964" y="1013" width="2" height="4"/>
<rect x="983" y="1015" width="6" height="7" rx="1.500"/><rect x="991" y="1015" width="6" height="7" rx="1.500"/><rect x="983" y="1024" width="6" height="7" rx="1.500"/><rect x="991" y="1024" width="6" height="7" rx="1.500"/>
<path d="M1014 1014l6 6-2 8-2-2v5h-4v-5l-2 2-2-8z"/>
</g>
<circle cx="961.500" cy="1024" r="1.500" fill="#fff"/><circle cx="968.500" cy="1024" r="1.500" fill="#fff"/>
</svg>

<!-- watermark -->
<div class="a" style="left:895px;top:846px;width:673px;height:162px;background:rgba(225,225,225,.7);z-index:10"></div>
<span class="t" style="left:913px;top:858px;font-size:69px;font-weight:700;color:#e30a0a;letter-spacing:2px;z-index:10">电脑技术网</span>
<span class="t" style="left:910px;top:946px;font-family:'Liberation Serif',serif;font-size:54.5px;color:#0a5fd0;z-index:10">www.tagxp.com</span>
<svg width="1920" height="1051" style="z-index:10">
<rect x="1289" y="846" width="270" height="162" rx="38" fill="#075ad4"/>
<text x="1300" y="971" font-family="Liberation Sans, sans-serif" font-size="134" fill="#d9d9d9" textLength="240" lengthAdjust="spacingAndGlyphs" stroke="#d9d9d9" stroke-width="3">TAG</text>
<g opacity=".85">
<path d="M1803 1001c-20 2-39 10-42 22-1 8 8 13 18 10-9 1-13-4-11-10 3-10 17-17 35-22z" fill="#1f6fb0"/>
<path d="M1785 1016c-6 0-10 3-9 7 1 3 6 3 9 1-2 0-4 0-4-2 0-3 6-5 12-3 4 2 3 8-3 12-3 3-9 5-11 7 10-1 22-6 24-14 1-6-8-9-18-8z" fill="#3d9b35"/>
</g>
</svg>
<span class="t" style="left:1804px;top:1002px;font-size:21px;font-weight:700;color:#1f5c9e;z-index:10">极光下载站</span>
<span class="t" style="left:1805px;top:1026px;font-size:16.5px;color:#237a37;z-index:10">www.xz7.com</span>
</div></body></html>
